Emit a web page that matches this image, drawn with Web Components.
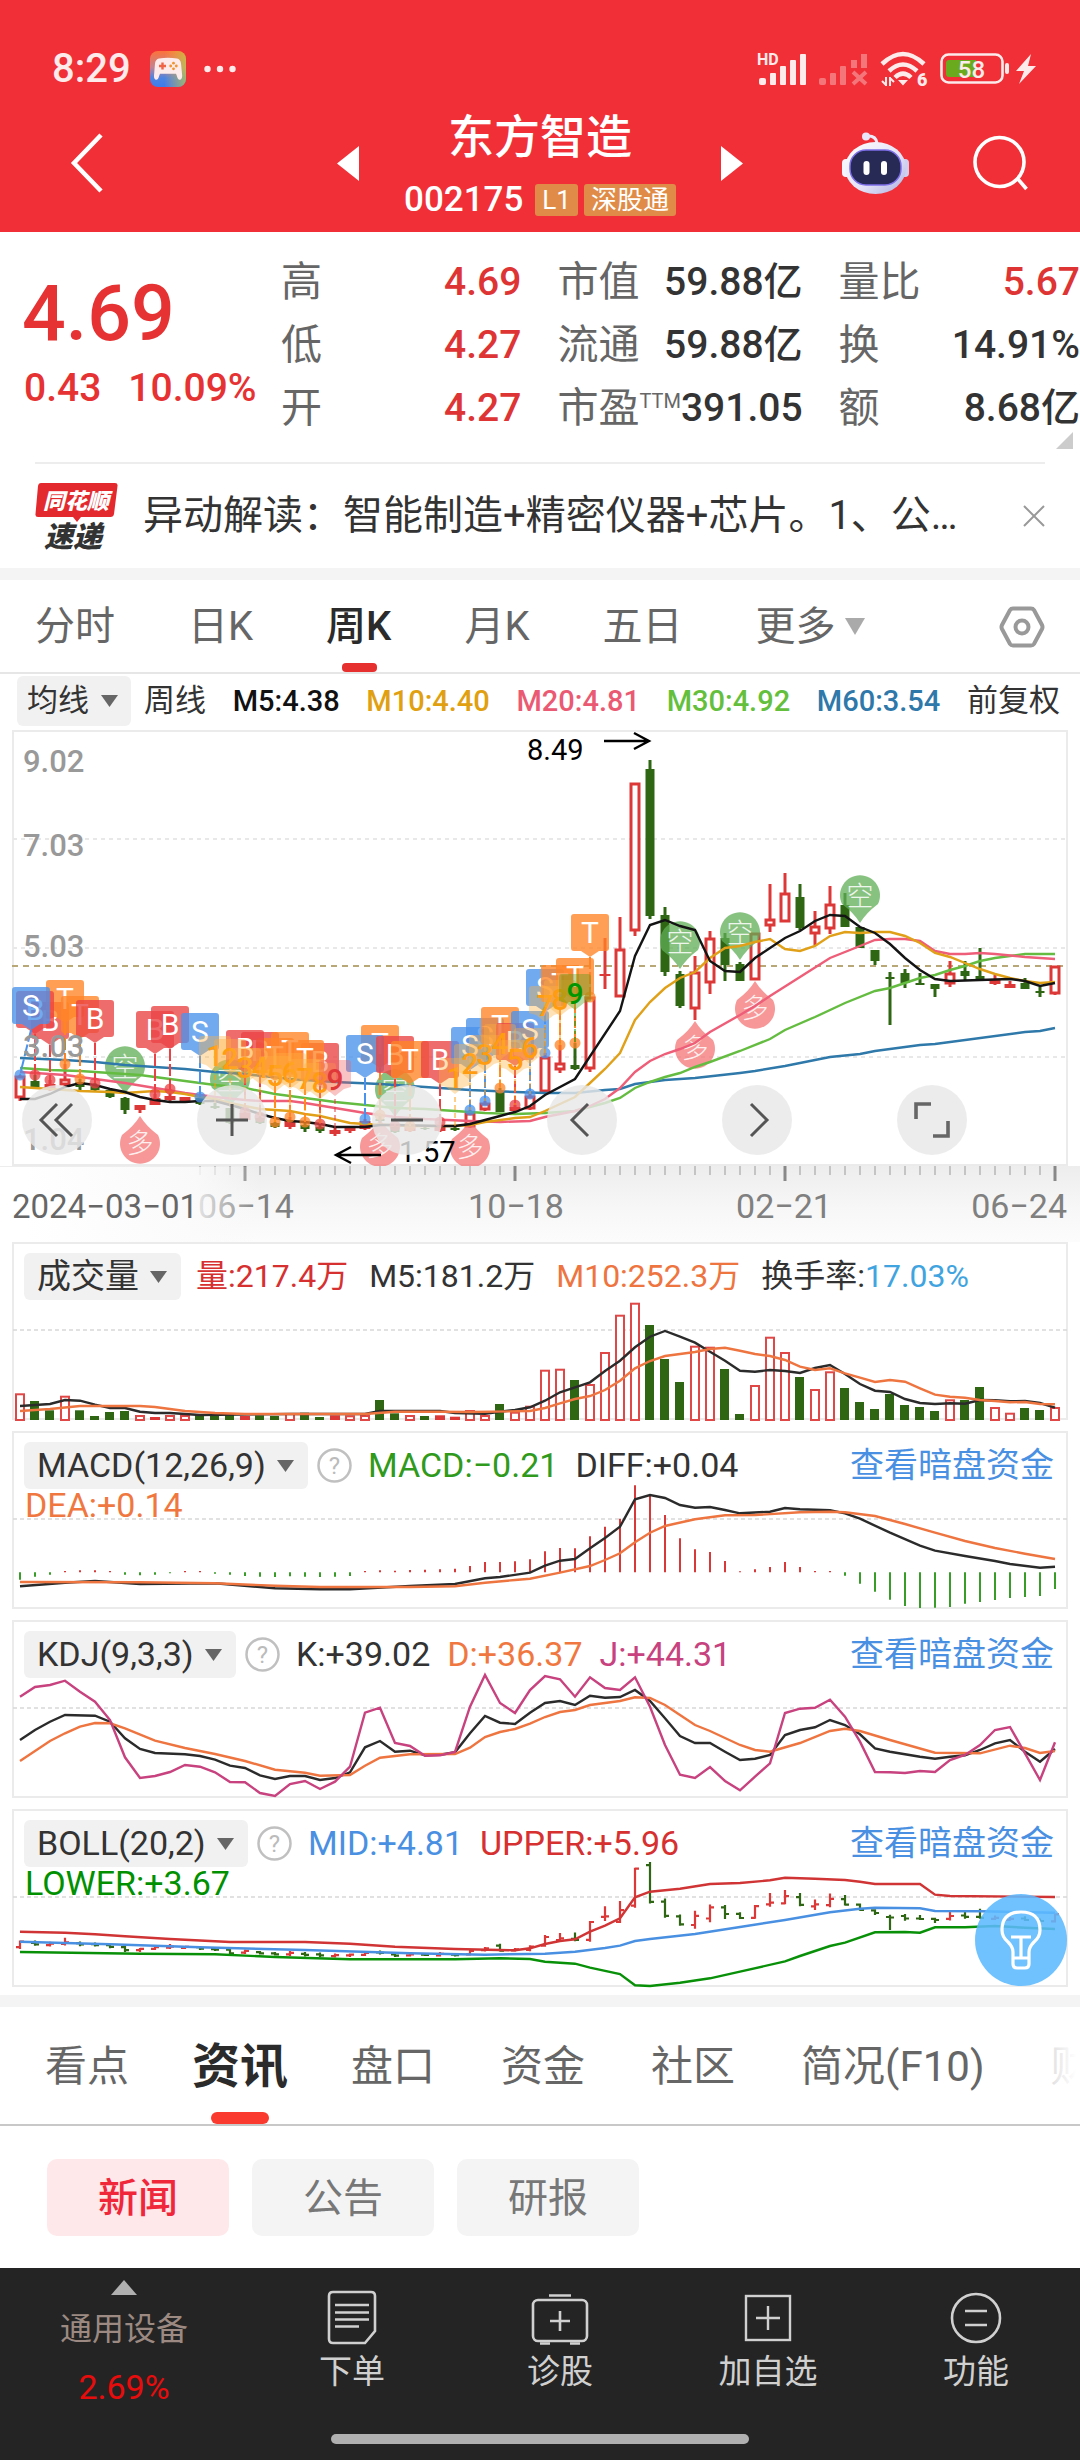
<!DOCTYPE html>
<html lang="zh-CN">
<head>
<meta charset="utf-8">
<meta name="viewport" content="width=device-width, initial-scale=1">
<title>东方智造 002175</title>
<style>
  body {
    margin: 0;
    background: #fff;
    color: #333;
    font-family: Roboto, "Noto Sans CJK SC", sans-serif;
  }
</style>
</head>
<body>
<app-header></app-header>
<quote-panel></quote-panel>
<news-bar>异动解读：智能制造+精密仪器+芯片。1、公…</news-bar>
<period-tabs></period-tabs>
<ma-legend></ma-legend>
<k-chart></k-chart>
<indicator-panel type="volume">
  <k-select slot="name" label="指标">成交量</k-select>
  <span style="color:#d63030">量:217.4万</span>
  <span>M5:181.2万</span>
  <span style="color:#ee7440">M10:252.3万</span>
  <span>换手率:<span style="color:#3fa4e0">17.03%</span></span>
</indicator-panel>
<indicator-panel type="macd" help link>
  <k-select slot="name" label="指标">MACD(12,26,9)</k-select>
  <span style="color:#2f9a1c">MACD:−0.21</span>
  <span>DIFF:+0.04</span>
  <span slot="second" style="color:#f07840">DEA:+0.14</span>
</indicator-panel>
<indicator-panel type="kdj" help link>
  <k-select slot="name" label="指标">KDJ(9,3,3)</k-select>
  <span>K:+39.02</span>
  <span style="color:#f07840">D:+36.37</span>
  <span style="color:#c7427e">J:+44.31</span>
</indicator-panel>
<indicator-panel type="boll" help link>
  <k-select slot="name" label="指标">BOLL(20,2)</k-select>
  <span style="color:#4a90e2">MID:+4.81</span>
  <span style="color:#d63030">UPPER:+5.96</span>
  <span slot="second" style="color:#009000">LOWER:+3.67</span>
  <tip-button slot="over"></tip-button>
</indicator-panel>
<section-tabs></section-tabs>
<chip-row></chip-row>
<bottom-bar></bottom-bar>

<script>
const BASE = `
  * { box-sizing: border-box; }
  button, select { font: inherit; color: inherit; border: 0; background: none; padding: 0; margin: 0; cursor: pointer; }
  a { color: inherit; text-decoration: none; }
  svg { display: block; flex: none; overflow: visible; }
`;

function attach(el, html) {
  const template = document.createElement('template');
  template.innerHTML = html;
  const root = el.attachShadow({ mode: 'open' });
  root.appendChild(template.content.cloneNode(true));
  return root;
}

class AppHeader extends HTMLElement {
  constructor() {
    super();
    attach(this, `
      <style>${BASE}
        :host { display: block; background: #f02f37; color: #fff; padding: 46px 0 16px; }
        .status { display: flex; align-items: center; height: 46px; padding: 0 44px 0 52px; opacity: .9; }
        .time { font-size: 40px; line-height: 46px; font-weight: 500; margin-right: 19px; }
        .dots { margin-left: 18px; }
        .sys { display: flex; align-items: center; margin-left: auto; gap: 12px; }
        .sys svg:last-child { margin-left: -6px; }
        .nav { display: grid; grid-template-columns: 1fr 406px 1fr; align-items: center; padding: 18px 60px 0; }
        .back { margin-left: 8px; }
        .mid { display: flex; align-items: center; justify-content: space-between; }
        .stock { display: flex; flex-direction: column; align-items: center; gap: 20px; }
        h1 { margin: 0; font-size: 46px; line-height: 54px; font-weight: 500; }
        .code { display: flex; align-items: center; gap: 6px; font-size: 35px; line-height: 32px; font-weight: 500; }
        .code b { background: #e08c48; border-radius: 3px; font-size: 26px; font-weight: 400; padding: 0 7px; }
        .code b:first-of-type { margin-left: 6px; }
        .tools { display: flex; justify-content: flex-end; align-items: center; gap: 64px; margin-right: -8px; }
      </style>
      <div class="status">
        <span class="time">8:29</span>
        <svg width="36" height="36" viewBox="0 0 36 36">
          <defs>
            <linearGradient id="pad" x1="0" y1="0" x2="0" y2="1"><stop offset="0" stop-color="#ff7a3c"/><stop offset=".45" stop-color="#c08a9a"/><stop offset=".75" stop-color="#3b8cf5"/><stop offset="1" stop-color="#2f84ff"/></linearGradient>
            <linearGradient id="pad2"><stop offset=".4" stop-color="#ffc830" stop-opacity="0"/><stop offset="1" stop-color="#b8e040"/></linearGradient>
          </defs>
          <rect width="36" height="36" rx="8" fill="url(#pad)"/><rect width="36" height="36" rx="8" fill="url(#pad2)" opacity=".7"/>
          <path d="M9 7.500q9-1.500 18 0q3.500.8 4 5l1.200 12q0 4-2.400 4.300q-2 .2-3-4l-.8-2H10l-.8 2q-1 4.200-3 4q-2.400-.3-2.200-4.300l1-12q.5-4.200 4-5z" fill="#fff"/>
          <path d="M12.500 11.500v7M9 15h7" stroke="#f06a48" stroke-width="2.400"/>
          <g fill="#f0a030"><circle cx="23.500" cy="12.200" r="1.400"/><circle cx="23.500" cy="17.800" r="1.400"/><circle cx="20.700" cy="15" r="1.400"/><circle cx="26.300" cy="15" r="1.400"/></g>
        </svg>
        <svg class="dots" width="32" height="8" viewBox="0 0 32 8" fill="#fff"><circle cx="3.500" cy="4" r="3.200"/><circle cx="16" cy="4" r="3.200"/><circle cx="28.500" cy="4" r="3.200"/></svg>
        <div class="sys">
          <svg width="50" height="36" viewBox="0 -2 50 36" fill="#fff">
            <text x="0" y="12" font-size="16" font-weight="700">HD</text>
            <rect x="2" y="25" width="7" height="7" rx="2"/><rect x="13" y="20" width="6" height="12" rx="1"/><rect x="23" y="13" width="6" height="19" rx="1"/><rect x="33" y="7" width="6" height="25" rx="1"/><rect x="43" y="1" width="6" height="31" rx="1"/>
          </svg>
          <svg width="49" height="36" viewBox="0 -2 49 36" fill="#fff" opacity=".38">
            <rect x="0" y="25" width="7" height="7" rx="2"/><rect x="11" y="20" width="6" height="12" rx="1"/><rect x="21" y="13" width="6" height="19" rx="1"/><rect x="32" y="7" width="6" height="8"/><rect x="42" y="1" width="6" height="14"/>
            <path d="M34 19l13 12M47 19l-13 12" stroke="#fff" stroke-width="4"/>
          </svg>
          <svg width="48" height="36" viewBox="0 0 48 36" fill="none" stroke="#fff" stroke-width="4.500">
            <path d="M2 13q21-20 42 0M9 20q14-13 28 0M15 26.500q8-8 16 0"/>
            <path d="M18 29h10l-5 5.500z" fill="#fff" stroke="none"/>
            <path d="M6 26v9M2 30l4 4M10 35v-9M14 31l-4-4" stroke-width="2"/>
            <text x="37" y="35" font-size="18" font-weight="900" fill="#fff" stroke="none">6</text>
          </svg>
          <svg width="70" height="32" viewBox="0 0 70 32">
            <rect x="1.500" y="1.500" width="61" height="28" rx="7" fill="none" stroke="#fff" stroke-width="2.600"/>
            <path d="M9 7h27v17H9q-3 0-3-3v-11q0-3 3-3z" fill="#5cb81c"/>
            <rect x="65" y="10" width="4" height="11" rx="2" fill="#fff"/>
            <text x="31.500" y="24.500" font-size="24" font-weight="500" text-anchor="middle" fill="#fff">58</text>
          </svg>
          <svg width="20" height="30" viewBox="0 0 20 30" fill="#fff"><path d="M15 0L0 17h8L3 30L20 12h-8z"/></svg>
        </div>
      </div>
      <div class="nav">
        <button class="back" aria-label="返回"><svg width="36" height="62" viewBox="0 0 36 62" fill="none" stroke="#fff" stroke-width="4.500"><path d="M33 3L6 31l27 28"/></svg></button>
        <div class="mid">
          <button aria-label="上一只"><svg width="22" height="35" viewBox="0 0 22 35" fill="#fff"><path d="M22 0v35L0 17.500z"/></svg></button>
          <div class="stock">
            <h1>东方智造</h1>
            <div class="code"><span>002175</span><b>L1</b><b>深股通</b></div>
          </div>
          <button aria-label="下一只"><svg width="22" height="35" viewBox="0 0 22 35" fill="#fff"><path d="M0 0v35l22-17.500z"/></svg></button>
        </div>
        <div class="tools">
          <button aria-label="智能助手"><svg width="67" height="62" viewBox="0 0 67 62">
            <defs><linearGradient id="hd" x1="0" y1="0" x2="1" y2="1"><stop offset="0" stop-color="#fff"/><stop offset=".6" stop-color="#e2e0f6"/><stop offset="1" stop-color="#a9aee0"/></linearGradient></defs>
            <path d="M24 4q10-1 11 7" fill="none" stroke="#ecebfa" stroke-width="3"/><circle cx="24" cy="4.500" r="4" fill="#e8e6f8"/>
            <rect x="0" y="27" width="9" height="18" rx="4" fill="#f4f4ff"/><rect x="58" y="27" width="9" height="18" rx="4" fill="#cfd0f0"/>
            <ellipse cx="33.500" cy="36" rx="30.500" ry="26" fill="url(#hd)"/>
            <rect x="8" y="18" width="51" height="35" rx="16" fill="#262a55" stroke="#7d6ee8" stroke-width="1.500"/>
            <rect x="21.500" y="29" width="6" height="14" rx="3" fill="#fff"/><rect x="39" y="29" width="6" height="14" rx="3" fill="#fff"/>
          </svg></button>
          <button aria-label="搜索"><svg width="55" height="56" viewBox="0 0 55 56" fill="none" stroke="#fff" stroke-width="3.600"><circle cx="26.500" cy="27" r="24.500"/><path d="M44 43l9.500 11"/></svg></button>
        </div>
      </div>
    `);
  }
}
customElements.define('app-header', AppHeader);

class QuotePanel extends HTMLElement {
  constructor() {
    super();
    attach(this, `
      <style>${BASE}
        :host { display: flex; position: relative; padding: 19px 0 22px 24px; }
        .price { width: 257px; flex: none; color: #e63232; font-weight: 500; }
        .last { font-size: 77px; line-height: 88px; padding-top: 19px; margin-left: -2px; }
        .chg { display: flex; gap: 27px; font-size: 39px; line-height: 60px; white-space: nowrap; }
        dl { margin: 0; flex: 1; display: grid; grid-template-columns: 242fr 241fr 243fr; column-gap: 36px; font-size: 41px; line-height: 63px; }
        dl div { display: flex; justify-content: space-between; white-space: nowrap; }
        dt { color: #666; }
        dd { margin: 0; font-size: 39px; font-weight: 500; }
        .up { color: #de3434; }
        sup { font-size: 20px; line-height: 0; vertical-align: 14px; }
        .more { position: absolute; right: 7px; bottom: 13px; }
      </style>
      <div class="price">
        <div class="last">4.69</div>
        <div class="chg"><span>0.43</span><span>10.09%</span></div>
      </div>
      <dl>
        <div><dt>高</dt><dd class="up">4.69</dd></div>
        <div><dt>市值</dt><dd>59.88亿</dd></div>
        <div><dt>量比</dt><dd class="up">5.67</dd></div>
        <div><dt>低</dt><dd class="up">4.27</dd></div>
        <div><dt>流通</dt><dd>59.88亿</dd></div>
        <div><dt>换</dt><dd>14.91%</dd></div>
        <div><dt>开</dt><dd class="up">4.27</dd></div>
        <div><dt>市盈<sup>TTM</sup></dt><dd>391.05</dd></div>
        <div><dt>额</dt><dd>8.68亿</dd></div>
      </dl>
      <svg class="more" width="17" height="17" viewBox="0 0 17 17" fill="#ccc"><path d="M17 0v17H0z"/></svg>
    `);
  }
}
customElements.define('quote-panel', QuotePanel);

class NewsBar extends HTMLElement {
  constructor() {
    super();
    attach(this, `
      <style>${BASE}
        :host { display: block; border-bottom: 12px solid #f4f4f4; }
        .row { display: flex; align-items: center; height: 106px; margin: 0 35px; border-top: 2px solid #ededed; }
        a { flex: 1; margin-left: 25px; font-size: 40px; line-height: 60px; white-space: nowrap; overflow: hidden; text-overflow: ellipsis; }
      </style>
      <div class="row">
        <svg width="83" height="68" viewBox="0 0 83 68" font-weight="900" font-style="italic">
          <path d="M6 1h74q3 0 2.500 3l-3.500 28q-.5 3-3.500 3H46l-4 5-4-5H3q-3 0-2.500-3L3 4q.5-3 3-3z" fill="#e4292e"/>
          <text x="8" y="27" font-size="22" fill="#fff">同花顺</text>
          <text x="9" y="65" font-size="29" fill="#333">速递</text>
        </svg>
        <a href="#"><slot></slot></a>
        <button aria-label="关闭"><svg width="22" height="22" viewBox="0 0 22 22" stroke="#999" stroke-width="2"><path d="M1 1l20 20M21 1L1 21"/></svg></button>
      </div>
    `);
  }
}
customElements.define('news-bar', NewsBar);

class PeriodTabs extends HTMLElement {
  constructor() {
    super();
    attach(this, `
      <style>${BASE}
        :host { display: block; border-bottom: 2px solid #e6e6e6; }
        nav { display: flex; align-items: stretch; height: 92px; padding: 0 35px 0 35px; color: #666; font-size: 40px; line-height: 60px; }
        button { position: relative; margin-right: 73px; padding-top: 1px; white-space: nowrap; }
        .on { color: #2b2b2b; font-weight: 500; }
        .on::after { content: ""; position: absolute; left: 50%; bottom: 0; width: 35px; margin-left: -17px; height: 9px; border-radius: 4px; background: #e63030; }
        .more { display: flex; align-items: center; gap: 9px; }
        .set { margin: 0 0 0 auto; }
      </style>
      <nav>
        <button>分时</button><button>日K</button><button class="on">周K</button><button>月K</button><button>五日</button>
        <button class="more">更多<svg width="20" height="17" viewBox="0 0 20 17" fill="#aaa"><path d="M0 0h20L10 17z"/></svg></button>
        <button class="set" aria-label="设置"><svg width="46" height="42" viewBox="0 0 46 42" fill="none" stroke="#999" stroke-width="4"><path d="M14 2.500h18q2 0 3 1.500l8 15q1 2 0 4l-8 15q-1 1.500-3 1.500H14q-2 0-3-1.500l-8-15q-1-2 0-4l8-15q1-1.500 3-1.500z"/><circle cx="23" cy="21" r="6.500"/></svg></button>
      </nav>
    `);
  }
}
customElements.define('period-tabs', PeriodTabs);

class KSelect extends HTMLElement {
  constructor() {
    super();
    const root = attach(this, `
      <style>${BASE}
        :host { display: inline-block; flex: none; color: #333; }
        label { display: flex; align-items: center; position: relative; background: #f1f1f1; border-radius: 6px; }
        select { appearance: none; height: var(--select-h, 47px); padding: 0 42px 0 var(--select-pad, 13px); outline: none; }
        svg { position: absolute; right: var(--select-arrow, 14px); pointer-events: none; }
      </style>
      <label><select><option></option></select><svg width="17" height="12" viewBox="0 0 17 12" fill="#666"><path d="M0 0h17L8.500 12z"/></svg></label>
    `);
    const select = root.querySelector('select');
    select.setAttribute('aria-label', this.getAttribute('label'));
    root.querySelector('option').textContent = this.textContent;
  }
}
customElements.define('k-select', KSelect);

class MaLegend extends HTMLElement {
  constructor() {
    super();
    attach(this, `
      <style>${BASE}
        :host { display: flex; align-items: center; height: 54px; padding: 0 20px 0 17px; font-size: 29px; line-height: 44px; white-space: nowrap; font-weight: 500; }
        k-select { --select-h: 50px; --select-pad: 10px; --select-arrow: 13px; font-size: 31px; font-weight: 400; }
        .list { flex: 1; display: flex; justify-content: space-between; margin-left: 13px; }
        .cn { font-size: 31px; font-weight: 400; }
      </style>
      <k-select label="主图指标">均线</k-select>
      <div class="list">
        <span class="cn">周线</span>
        <span style="color:#111">M5:4.38</span>
        <span style="color:#e0a010">M10:4.40</span>
        <span style="color:#ea5a72">M20:4.81</span>
        <span style="color:#64c03c">M30:4.92</span>
        <span style="color:#2e78aa">M60:3.54</span>
        <span class="cn">前复权</span>
      </div>
    `);
  }
}
customElements.define('ma-legend', MaLegend);

const RED = '#dc3838';
const GREEN = '#2f6614';
const X = (i) => 20 + i * 15;

// [kind, body top, body bottom, high, low]; r: hollow, R: filled red, g: green
const CANDLES = [
  ['r',1076,1098,1075,1101],['g',1081,1087,1075,1088],['R',1084,1090,1080,1091],['r',1079,1085,1064,1087],['g',1082,1087,1079,1090],
  ['g',1086,1090,1083,1091],['g',1090,1097,1090,1098],['g',1098,1110,1097,1114],['R',1105,1110,1105,1113],['R',1098,1105,1094,1105],
  ['R',1096,1100,1089,1101],['R',1097,1101,1097,1101],['g',1098,1104,1097,1105],['g',1106,1108,1103,1109],['g',1108,1123,1108,1124],
  ['R',1113,1120,1112,1121],['g',1118,1123,1117,1124],['g',1123,1127,1122,1128],['R',1121,1127,1117,1129],['g',1125,1129,1122,1132],
  ['g',1127,1131,1124,1133],['R',1130,1134,1128,1136],['R',1128,1131,1127,1133],['R',1121,1129,1119,1130],['g',1119,1121,1115,1123],
  ['g',1127,1132,1126,1133],['R',1127,1131,1126,1132],['g',1128,1129,1127,1130],['R',1125,1131,1122,1132],['g',1128,1130,1127,1131],
  ['r',1113,1127,1110,1128],['r',1103,1110,1101,1111],['g',1092,1112,1088,1112],['R',1107,1111,1105,1112],['r',1096,1109,1094,1110],
  ['r',1057,1092,1053,1092],['r',1063,1070,1045,1073],['g',1065,1069,1043,1070],['r',997,1069,997,1072],['R',974,976,938,989],
  ['r',949,997,917,997],['r',783,931,783,936],['g',769,916,760,919],['g',915,972,907,976],['g',974,1006,971,1008],
  ['r',972,1009,956,1020],['r',938,983,931,994],['g',938,965,933,981],['g',964,981,962,981],['r',933,980,933,980],
  ['r',919,926,884,932],['r',893,922,873,922],['g',897,928,884,930],['r',926,934,911,945],['r',904,929,886,934],
  ['g',905,927,893,927],['g',927,948,927,948],['g',950,961,950,965],['g',977,979,972,1025],['g',973,983,969,988],
  ['g',983,985,973,985],['g',984,989,984,997],['r',973,984,961,987],['g',971,976,961,980],['g',976,980,948,980],
  ['R',980,984,975,985],['R',984,988,981,988],['g',983,989,978,989],['g',991,993,987,997],['r',966,994,966,995]
];

const MA = {
  '#2e78aa': '20,1058 65,1060 95,1062 125,1065 155,1067 185,1069 215,1072 245,1074 290,1079 335,1082 380,1084 425,1087 470,1090 515,1092 545,1093 575,1093 605,1090 620,1089 635,1084 665,1080 695,1078 740,1073 755,1071 785,1066 830,1057 860,1054 875,1051 920,1045 935,1044 1025,1032 1040,1031 1055,1028',
  '#64bc40': '20,1068 50,1070 80,1071 110,1073 140,1075 170,1079 200,1083 215,1085 245,1088 275,1094 305,1098 335,1102 365,1105 395,1108 425,1109 455,1111 485,1113 515,1114 545,1113 560,1112 575,1111 590,1107 605,1103 620,1098 635,1088 650,1082 665,1077 680,1073 695,1067 710,1062 740,1051 770,1039 785,1030 815,1017 845,1003 875,991 890,988 905,983 920,978 935,975 950,970 965,966 980,961 995,958 1010,956 1025,954 1055,954',
  '#ee5e78': '20,1072 65,1075 95,1079 125,1083 155,1088 185,1093 215,1097 245,1100 260,1101 290,1101 305,1103 335,1108 365,1113 395,1117 425,1119 470,1121 500,1122 530,1121 545,1117 575,1111 590,1106 605,1099 620,1088 635,1072 650,1061 665,1054 680,1049 695,1043 710,1032 740,1015 755,1006 770,996 800,977 830,958 860,946 875,940 890,939 905,939 920,941 935,951 950,954 965,954 980,953 995,954 1025,957 1055,959',
  '#e0a018': '20,1087 50,1089 80,1091 110,1092 125,1093 155,1091 170,1092 185,1094 200,1097 215,1099 230,1103 245,1106 260,1109 275,1110 290,1111 305,1114 320,1116 350,1123 365,1124 410,1126 455,1126 470,1125 485,1122 515,1118 530,1117 545,1111 560,1104 575,1097 590,1083 605,1069 620,1053 635,1020 650,1002 665,988 680,978 695,972 710,958 725,948 740,946 755,942 770,939 785,949 800,951 815,946 830,936 845,932 860,933 875,932 890,932 905,936 920,943 935,953 950,957 965,963 980,969 995,974 1010,978 1025,981 1040,983 1055,982',
  '#141414': '20,1099 35,1099 50,1094 65,1087 80,1083 95,1085 110,1089 125,1092 140,1097 155,1100 170,1102 185,1102 200,1101 215,1101 230,1105 245,1109 260,1114 275,1118 290,1121 305,1122 320,1124 335,1127 365,1127 380,1125 395,1125 440,1126 455,1126 470,1124 485,1120 500,1116 515,1112 530,1106 545,1095 575,1079 620,1011 635,956 650,925 665,920 680,926 695,930 710,961 725,971 740,972 755,958 770,948 785,938 800,931 815,921 830,915 845,916 860,927 875,933 890,944 905,958 920,970 935,979 950,981 980,980 1010,979 1025,981 1040,986 1055,983'
};

const FLAG_COLOR = { S: '#4a92ec', B: '#ea4244', T: '#ff8426' };

// [candle index, letter, top of the flag], bottom-most first
const FLAGS = [
  [2,'B',1002],[3,'T',980],[4,'T',996],[1,'B',991],[0,'S',987],[5,'B',1000],[9,'B',1011],[10,'B',1006],[12,'S',1013],
  [20,'B',1043],[16,'B',1032],[17,'T',1038],[18,'T',1032],[19,'T',1040],[15,'B',1030],
  [24,'T',1025],[23,'S',1035],[25,'B',1036],[26,'T',1041],[28,'B',1041],
  [31,'S',1018],[30,'S',1027],[32,'T',1007],[33,'B',1023],[34,'S',1011],[35,'S',969],[36,'T',965],[37,'T',958],[38,'T',914]
];

// countdown digits: [candle index, digit, centre]
const COUNTS = [
  [13,1,1055],[14,2,1058],[15,3,1067],[16,4,1067],[17,5,1075],[18,6,1072],[19,7,1078],[20,8,1082],[21,9,1079],
  [29,1,1077],[30,2,1063],[31,3,1054],[32,4,1043],[33,5,1059],[34,6,1047],[35,7,1005],[36,8,999],[37,9,993]
];

const SHORTS = [[7,1067],[14,1080],[25,1090],[44,942],[48,933],[56,896]];
const LONGS = [[8,1143],[24,1146],[30,1147],[45,1048],[49,1008]];

function candle([kind, top, bottom, high, low], i) {
  const x = X(i);
  const color = kind === 'g' ? GREEN : RED;
  const wick = `<path d="M${x} ${high}V${top}M${x} ${bottom}V${low}" stroke="${color}" stroke-width="3"/>`;
  if (kind === 'r') {
    return wick + `<rect x="${x - 4}" y="${top + 1}" width="8" height="${Math.max(bottom - top - 2, 2)}" fill="#fff" stroke="${color}" stroke-width="3"/>`;
  }
  const w = kind === 'g' ? 9 : 11;
  return wick + `<rect x="${x - w / 2}" y="${top}" width="${w}" height="${bottom - top}" fill="${color}"/>`;
}

function flag([i, letter, top]) {
  const x = X(i);
  const c = Math.max(x, 31);
  const color = FLAG_COLOR[letter];
  const end = CANDLES[i][3];
  return `
    <path d="M${c} ${top + 43}L${x} ${end}" stroke="${color}" stroke-width="2" stroke-dasharray="12 3"/>
    <circle cx="${x}" cy="${end}" r="5.500" fill="${color}" opacity=".75"/>
    <g opacity=".78"><path d="M${c - 16} ${top}h32q3 0 3 3v31q0 3-3 3h-7l-9 6-9-6h-7q-3 0-3-3v-31q0-3 3-3z" fill="${color}"/></g>
    <text x="${c}" y="${top + 29}" font-size="30" text-anchor="middle" fill="#fff">${letter}</text>`;
}

function count([i, n, y]) {
  const x = X(i);
  let bg = '#ffb040';
  let ink = '#ff9c10';
  if (n === 9) {
    bg = i > 30 ? '#4c9a10' : '#ee6060';
    ink = i > 30 ? '#009600' : '#e03838';
  }
  return `
    <path d="M${x} ${y + 20}V${CANDLES[i][3]}" stroke="${ink}" stroke-dasharray="5 3"/>
    <path d="M${x - 13} ${y - 19}h26q3 0 3 3v24l-7 2-9 7-9-7-7-2v-24q0-3 3-3z" fill="${bg}" opacity=".38"/>
    <text x="${x}" y="${y + 11}" font-size="30" font-weight="500" text-anchor="middle" fill="${ink}">${n}</text>`;
}

function bubble(i, y, word) {
  const up = word === '多';
  const x = X(i);
  const s = up ? -1 : 1;
  return `
    <path d="M${x - 18} ${y + 8 * s}Q${x - 6} ${y + 17 * s} ${x} ${y + 27 * s}Q${x + 6} ${y + 17 * s} ${x + 18} ${y + 8 * s}A20 20 0 1 ${up ? 1 : 0} ${x - 18} ${y + 8 * s}z" fill="${up ? '#f47474' : '#60ae56'}" opacity=".75"/>
    <text x="${x}" y="${y + 10}" font-size="27" font-weight="300" text-anchor="middle" fill="#fff" opacity=".85">${word}</text>`;
}

class KChart extends HTMLElement {
  constructor() {
    super();
    const labels = [['9.02', 772], ['7.03', 856], ['5.03', 957], ['3.03', 1057], ['1.04', 1150]]
      .map(([t, y]) => `<text x="23" y="${y}">${t}</text>`).join('');
    let ticks = '';
    for (let i = 12; i < 70; i++) {
      const major = i % 18 === 15;
      ticks += `<path d="M${X(i)} 1166v${major ? 15 : 9}" stroke="${major ? '#888' : '#c4c4c4'}" stroke-width="${major ? 3 : 2}"/>`;
    }
    attach(this, `
      <style>${BASE}
        :host { display: block; position: relative; }
        .chart { width: 100%; height: auto; }
        .pad { position: absolute; top: 357px; left: 22px; display: flex; gap: 105px; }
        .pad button { width: 70px; height: 70px; border-radius: 50%; background: rgba(232, 232, 232, .82); display: grid; place-items: center; }
      </style>
      <svg class="chart" viewBox="0 728 1080 514" fill="none">
        <defs>
          <linearGradient id="axis" x1="0" y1="0" x2="0" y2="1"><stop offset="0" stop-color="#ededed"/><stop offset=".55" stop-color="#f7f7f7"/><stop offset="1" stop-color="#fcfcfc"/></linearGradient>
          <linearGradient id="fade"><stop offset=".1" stop-color="#fff"/><stop offset=".75" stop-color="#fbfbfb" stop-opacity=".85"/><stop offset="1" stop-color="#fafafa" stop-opacity="0"/></linearGradient>
          <clipPath id="box"><rect x="12" y="730" width="1056" height="436"/></clipPath>
        </defs>
        <rect x="13" y="731" width="1054" height="434" stroke="#ebebeb" stroke-width="2"/>
        <path d="M13 839H1067M13 948H1067M13 1057H1067" stroke="#e8e8e8" stroke-width="2" stroke-dasharray="4 4"/>
        <path d="M12 966H1067" stroke="#b8a878" stroke-width="2" stroke-dasharray="6 5"/>
        <g clip-path="url(#box)">
          ${CANDLES.map(candle).join('')}
          ${SHORTS.map(([i, y]) => bubble(i, y, '空')).join('')}
          ${LONGS.map(([i, y]) => bubble(i, y, '多')).join('')}
          ${Object.entries(MA).map(([c, pts]) => `<polyline points="${pts}" stroke="${c}" stroke-width="2.400"/>`).join('')}
          ${FLAGS.map(flag).join('')}
          ${COUNTS.map(count).join('')}
        </g>
        <g font-size="31" font-weight="500" fill="#999">${labels}</g>
        <g font-size="29" fill="#000">
          <text x="527" y="760">8.49</text>
          <text x="399" y="1162">1.57</text>
        </g>
        <path d="M604 741H649M634 733L649 741L634 749M381 1155H336M351 1147L336 1155L351 1163" stroke="#000" stroke-width="2.400"/>
        <rect x="0" y="1166" width="1080" height="76" fill="url(#axis)"/>
        ${ticks}
        <g font-size="34" fill="#808080">
          <text x="246" y="1218" text-anchor="middle">06−14</text>
          <text x="516" y="1218" text-anchor="middle">10−18</text>
          <text x="784" y="1218" text-anchor="middle">02−21</text>
          <text x="1067" y="1218" text-anchor="end">06−24</text>
        </g>
        <rect x="0" y="1167" width="260" height="75" fill="url(#fade)"/>
        <text x="12" y="1218" font-size="33" fill="#666">2024−03−01</text>
      </svg>
      <div class="pad">
        <button aria-label="最左"><svg width="36" height="36" viewBox="0 0 36 36" fill="none" stroke="#555" stroke-width="3"><path d="M18 2L2 18l16 16M33 2L17 18l16 16"/></svg></button>
        <button aria-label="放大"><svg width="34" height="34" viewBox="0 0 34 34" stroke="#555" stroke-width="3"><path d="M17 1v32M1 17h32"/></svg></button>
        <button aria-label="缩小"><svg width="34" height="34" viewBox="0 0 34 34" stroke="#555" stroke-width="3"><path d="M1 17h32"/></svg></button>
        <button aria-label="左移"><svg width="36" height="36" viewBox="0 0 36 36" fill="none" stroke="#555" stroke-width="3"><path d="M24 2L8 18l16 16"/></svg></button>
        <button aria-label="右移"><svg width="36" height="36" viewBox="0 0 36 36" fill="none" stroke="#555" stroke-width="3"><path d="M12 2l16 16-16 16"/></svg></button>
        <button aria-label="全屏"><svg width="36" height="36" viewBox="0 0 36 36" fill="none" stroke="#666" stroke-width="3.600"><path d="M2 17V2h15M34 19v15H19"/></svg></button>
      </div>
    `);
  }
}
customElements.define('k-chart', KChart);

// lines are "index:y" pairs, y in thirds of a pixel counted from the panel's origin
const PANELS = {
  volume: {
    origin: 36, grid: 88,
    bars: 'r490 g513 g541 r497 g541 g558 g546 g543 r555 R561 r555 r555 g555 g555 g555 R558 g556 g558 r549 g548 g561 R556 r556 r555 g510 g550 r555 g558 R556 R560 r540 r555 g522 r545 r527 r419 r416 g450 r462 r366 r254 r218 g285 g387 g456 r347 r350 g417 g552 r465 r320 r366 g441 r477 r424 g474 g516 g537 g492 g525 g531 g543 r508 g510 g471 r531 r548 g534 g540 r531',
    lines: {
      '#2b2b2b': '0:528 1:525 2:522 3:510 4:512 5:524 6:534 7:534 8:545 9:549 10:549 12:555 18:552 23:552 24:543 28:543 29:549 31:551 32:545 33:540 34:532 35:512 36:487 37:472 38:457 39:423 40:392 41:352 42:320 43:303 44:320 45:338 46:365 47:392 48:422 49:425 50:420 51:423 52:429 53:414 54:405 55:432 56:462 57:482 58:486 59:507 60:519 61:522 62:520 63:521 64:510 65:511 66:514 67:513 68:519 69:533',
      '#ee7440': '0:543 2:537 4:528 8:528 9:531 11:543 13:549 15:552 23:552 25:545 28:545 30:546 34:543 35:534 36:520 37:507 38:498 39:480 40:452 41:415 42:393 43:378 44:372 45:366 46:357 47:353 48:362 49:372 50:378 51:390 52:410 53:420 54:415 55:430 56:443 57:456 58:450 59:455 60:475 61:494 62:500 63:503 64:510 65:513 66:517 67:516 68:522 69:523'
    }
  },
  macd: {
    origin: 603, grid: 88, zero: 1027,
    hist: [1049,1040,1034,1023,1021,1021,1023,1034,1036,1034,1030,1023,1023,1031,1034,1038,1040,1041,1039,1040,1041,1040,1038,1023,1021,1022,1020,1019,1018,1016,1008,996,996,994,988,964,954,955,919,890,866,766,794,855,925,958,966,993,1024,1018,1011,996,1011,1023,1023,1037,1061,1085,1109,1128,1134,1133,1131,1121,1116,1110,1104,1101,1098,1077],
    lines: {
      '#2b2b2b': '0:1069 3:1058 5:1053 8:1062 13:1060 17:1075 20:1078 22:1078 26:1068 29:1062 31:1045 32:1041 34:1028 35:1007 36:992 37:987 38:955 39:924 40:890 41:808 42:795 43:804 44:825 45:833 46:831 47:840 48:850 50:845 51:834 52:838 54:841 55:850 56:866 58:908 60:947 61:962 63:978 65:993 66:1002 68:1013 69:1010',
      '#ee7440': '0:1056 8:1057 13:1060 17:1067 20:1071 26:1071 29:1069 31:1058 33:1050 34:1046 36:1028 38:1008 39:990 40:970 41:937 42:908 43:888 45:868 47:856 49:855 52:847 54:845 55:847 57:858 59:882 61:908 63:933 65:954 67:971 69:987'
    }
  },
  kdj: {
    origin: 30, grid: 88,
    lines: {
      '#2b2b2b': '0:390 1:360 2:335 3:315 5:317 6:335 7:385 8:417 9:429 11:433 12:438 13:449 14:467 15:474 16:496 17:507 18:498 19:498 20:510 21:504 22:487 23:412 24:393 25:425 26:422 27:436 28:434 29:427 30:370 31:318 32:338 33:342 34:308 35:279 36:273 37:285 38:257 39:263 40:261 41:240 42:273 43:325 44:378 45:399 46:399 47:425 48:450 49:446 50:435 51:375 52:360 53:352 54:330 55:345 56:373 57:415 58:425 60:440 61:446 62:440 63:436 64:420 65:400 66:390 67:425 68:455 69:417',
      '#ee7440': '0:453 2:393 3:370 4:350 5:339 6:340 7:355 9:392 11:414 13:432 15:453 17:479 19:488 20:497 22:495 23:467 24:443 26:433 29:432 30:413 31:381 32:366 33:357 34:341 35:321 36:306 37:300 38:285 40:273 41:262 42:264 43:285 44:315 45:345 46:363 48:405 49:420 50:425 52:399 54:363 55:356 56:363 58:390 61:428 64:430 66:407 67:414 68:429 69:423',
      '#c7427e': '0:260 1:231 2:225 3:212 4:245 5:275 6:330 7:442 8:504 9:498 10:486 11:465 12:470 13:487 14:516 15:517 16:549 17:558 18:522 19:513 20:537 21:515 22:470 23:308 24:293 25:399 26:408 27:437 28:436 29:426 30:290 31:195 32:279 33:309 34:240 35:198 36:208 37:260 38:202 39:234 40:240 41:202 42:290 43:405 44:494 45:504 46:471 47:513 48:541 49:500 50:460 51:309 52:296 53:293 54:269 55:320 56:395 57:486 58:487 59:489 60:483 61:486 62:450 63:435 64:405 65:360 66:351 67:430 68:510 69:397'
    }
  },
  boll: {
    origin: 597, grid: 88, ohlc: true,
    lines: {
      '#d03434': '0:965 3:968 5:973 7:979 10:987 14:996 19:996 22:1001 25:1010 29:1017 33:1021 34:1015 35:1002 36:993 37:988 38:965 39:947 40:925 41:862 42:845 44:836 46:822 48:819 50:811 51:803 53:806 55:810 56:815 57:822 60:822 61:854 62:858 69:861',
      '#4a90e2': '0:995 6:1003 12:1012 19:1020 26:1030 31:1034 35:1031 37:1025 39:1014 40:1007 41:993 42:987 45:972 48:951 51:930 54:907 56:896 57:893 60:895 61:903 64:904 69:908',
      '#089008': '0:1026 8:1031 13:1033 17:1041 22:1048 29:1048 32:1045 34:1047 35:1055 37:1061 38:1073 40:1092 41:1126 42:1128 44:1118 46:1105 48:1085 51:1054 52:1038 54:1008 55:998 57:967 59:966 60:968 61:952 63:952 65:948 67:953 69:957'
    }
  }
};

function drawPanel({ origin, grid, bars, hist, zero, ohlc, lines }) {
  const Y = (v) => Math.round((v - origin) / 3 * 10) / 10;
  let out = `<path d="M13 ${grid}H1067" stroke="#d8d8d8" stroke-width="1.500" stroke-dasharray="4 3"/>`;
  if (bars) {
    bars.split(' ').forEach((b, i) => {
      const y = Y(+b.slice(1));
      if (b[0] === 'r') {
        out += `<rect x="${X(i) - 4}" y="${y + 1}" width="8" height="${177 - y}" fill="#fff" stroke="#e04848" stroke-width="2"/>`;
      } else {
        out += `<rect x="${X(i) - 5}" y="${y}" width="${b[0] === 'g' ? 9 : 10}" height="${178 - y}" fill="${b[0] === 'g' ? GREEN : RED}"/>`;
      }
    });
  }
  if (hist) {
    hist.forEach((v, i) => {
      out += `<path d="M${X(i)} ${Y(zero)}V${Y(v)}" stroke="${v < zero ? '#d83838' : '#389c28'}" stroke-width="2"/>`;
    });
  }
  if (ohlc) {
    const P = (y) => Math.round((54 + (y - 760) * .249) * 10) / 10;
    CANDLES.forEach(([kind, top, bottom, high, low], i) => {
      const green = kind === 'g';
      const open = P(green ? top : bottom);
      const close = P(green ? bottom : top);
      out += `<path d="M${X(i)} ${P(high) - 1}V${P(low) + 1}M${X(i) - 4} ${open}h4M${X(i)} ${close}h4" stroke="${green ? GREEN : RED}" stroke-width="2.200"/>`;
    });
  }
  for (const [color, pts] of Object.entries(lines)) {
    const points = pts.split(' ').map((p) => {
      const [i, v] = p.split(':');
      return `${X(+i)},${Y(+v)}`;
    }).join(' ');
    out += `<polyline points="${points}" stroke="${color}" stroke-width="2.400"/>`;
  }
  return out;
}

class IndicatorPanel extends HTMLElement {
  constructor() {
    super();
    const help = this.hasAttribute('help') ? `
      <button class="help" aria-label="说明"><svg width="35" height="35" viewBox="0 0 35 35"><circle cx="17.500" cy="17.500" r="16" fill="none" stroke="#c0c0c0" stroke-width="2.500"/><text x="17.500" y="26" font-size="24" text-anchor="middle" fill="#bbb">?</text></svg></button>` : '';
    const link = this.hasAttribute('link') ? '<a href="#">查看暗盘资金</a>' : '';
    attach(this, `
      <style>${BASE}
        :host { display: grid; position: relative; margin: 0 12px 11px; font-size: 34px; line-height: 47px; white-space: nowrap; }
        :host > * { grid-area: 1 / 1; }
        .plot { width: 100%; height: auto; }
        .head { position: relative; padding: 11px 14px 0 12px; }
        .row { display: flex; align-items: center; height: 47px; }
        .vals { display: flex; gap: 17px; margin-left: 15px; }
        :host([type="volume"]) .vals { font-size: 32px; gap: 21px; }
        .help { margin: 0 1px 0 9px; }
        .second { line-height: 32px; padding-left: 1px; }
        a { margin-left: auto; color: #4a90e2; }
      </style>
      <svg class="plot" viewBox="12 0 1056 178" fill="none">
        <rect x="13" y="1" width="1054" height="176" stroke="#ebebeb" stroke-width="2"/>
        ${drawPanel(PANELS[this.getAttribute('type')])}
      </svg>
      <div class="head">
        <div class="row"><slot name="name"></slot>${help}<div class="vals"><slot></slot></div>${link}</div>
        <div class="second"><slot name="second"></slot></div>
      </div>
      <slot name="over"></slot>
    `);
  }
}
customElements.define('indicator-panel', IndicatorPanel);

class TipButton extends HTMLElement {
  constructor() {
    super();
    attach(this, `
      <style>${BASE}
        :host { position: absolute; right: 1px; top: 85px; }
        button { display: grid; place-items: center; width: 92px; height: 92px; border-radius: 50%; background: rgba(92, 186, 255, .88); }
      </style>
      <button aria-label="提示"><svg width="44" height="60" viewBox="0 0 44 60" fill="none" stroke="#fff" stroke-width="3.200"><path d="M14 42q0-5-5-10Q3 27 3 20Q3 2 22 2t19 18q0 7-6 12q-5 5-5 10v12q0 4-4 4h-8q-4 0-4-4zM14 48h16M12 27h20M22 27v20"/></svg></button>
    `);
  }
}
customElements.define('tip-button', TipButton);

class SectionTabs extends HTMLElement {
  constructor() {
    super();
    attach(this, `
      <style>${BASE}
        :host { display: block; margin-top: -3px; border-top: 12px solid #f4f4f4; border-bottom: 2px solid #c8c8c8; position: relative; overflow: hidden; }
        nav { display: flex; height: 117px; padding-left: 45px; gap: 66px; color: #666; font-size: 42px; line-height: 60px; white-space: nowrap; }
        button { position: relative; flex: none; padding-top: 2px; }
        .on { color: #2b2b2b; font-size: 48px; font-weight: 700; margin: 0 -3px; }
        .on::after { content: ""; position: absolute; left: 50%; bottom: 0; width: 58px; margin-left: -29px; height: 12px; border-radius: 6px; background: #fa3a2f; }
        .edge { position: absolute; top: 0; right: 0; width: 80px; height: 110px; background: linear-gradient(90deg, rgba(255, 255, 255, .4), #fff 95%); pointer-events: none; }
      </style>
      <nav>
        <button>看点</button><button class="on">资讯</button><button>盘口</button><button>资金</button><button>社区</button><button>简况(F10)</button><button>财务</button>
      </nav>
      <div class="edge"></div>
    `);
  }
}
customElements.define('section-tabs', SectionTabs);

class ChipRow extends HTMLElement {
  constructor() {
    super();
    attach(this, `
      <style>${BASE}
        :host { display: flex; gap: 23px; padding: 33px 47px 32px; font-size: 40px; }
        button { width: 182px; height: 77px; padding-bottom: 6px; border-radius: 10px; background: #f4f4f4; color: #777; }
        .on { background: #ffe8ea; color: #f0273a; font-weight: 500; }
      </style>
      <button class="on">新闻</button><button>公告</button><button>研报</button>
    `);
  }
}
customElements.define('chip-row', ChipRow);

class BottomBar extends HTMLElement {
  constructor() {
    super();
    attach(this, `
      <style>${BASE}
        :host { display: block; background: #242424; color: #d0d0d0; padding-bottom: 17px; }
        .items { display: grid; grid-template-columns: 248fr repeat(4, 208fr); font-size: 33px; line-height: 48px; height: 166px; }
        .items > * { display: flex; flex-direction: column; align-items: center; justify-content: flex-start; }
        button { padding-top: 18px; }
        button svg { margin-bottom: 2px; }
        .index { color: #9c8a82; font-size: 32px; padding-top: 12px; }
        .index svg { margin-bottom: 10px; }
        .index b { color: #e80c0c; font-size: 34px; font-weight: 400; line-height: 48px; margin-top: 10px; }
        .home { width: 418px; height: 10px; border-radius: 5px; background: #b0b0b0; margin: 0 auto; }
      </style>
      <div class="items">
        <a class="index" href="#"><svg width="26" height="15" viewBox="0 0 26 15" fill="#b0b0b0"><path d="M13 0l13 15H0z"/></svg><span>通用设备</span><b>2.69%</b></a>
        <button><svg width="56" height="60" viewBox="0 0 56 60" fill="none" stroke="#d0d0d0" stroke-width="2.600"><path d="M9 6h38q4 0 4 4v35L41 57H9q-4 0-4-4V10q0-4 4-4zM11 19h34M11 26.500h34M11 33.500h34M11 40.500h24"/></svg>下单</button>
        <button><svg width="60" height="60" viewBox="0 0 60 60" fill="none" stroke="#d0d0d0" stroke-width="2.600"><rect x="3" y="14" width="54" height="41" rx="5"/><path d="M19 9.500h22M10 57.500h10M40 57.500h10M30 25v20M20 35h20"/></svg>诊股</button>
        <button><svg width="60" height="60" viewBox="0 0 60 60" fill="none" stroke="#d0d0d0" stroke-width="2.400"><rect x="8" y="10" width="44" height="44"/><path d="M30 20v24M18 32h24"/></svg>加自选</button>
        <button><svg width="60" height="60" viewBox="0 0 60 60" fill="none" stroke="#d0d0d0" stroke-width="2.600"><circle cx="30" cy="32" r="24"/><path d="M19 25h22M19 39h22"/></svg>功能</button>
      </div>
      <div class="home"></div>
    `);
  }
}
customElements.define('bottom-bar', BottomBar);
</script>
</body>
</html>
